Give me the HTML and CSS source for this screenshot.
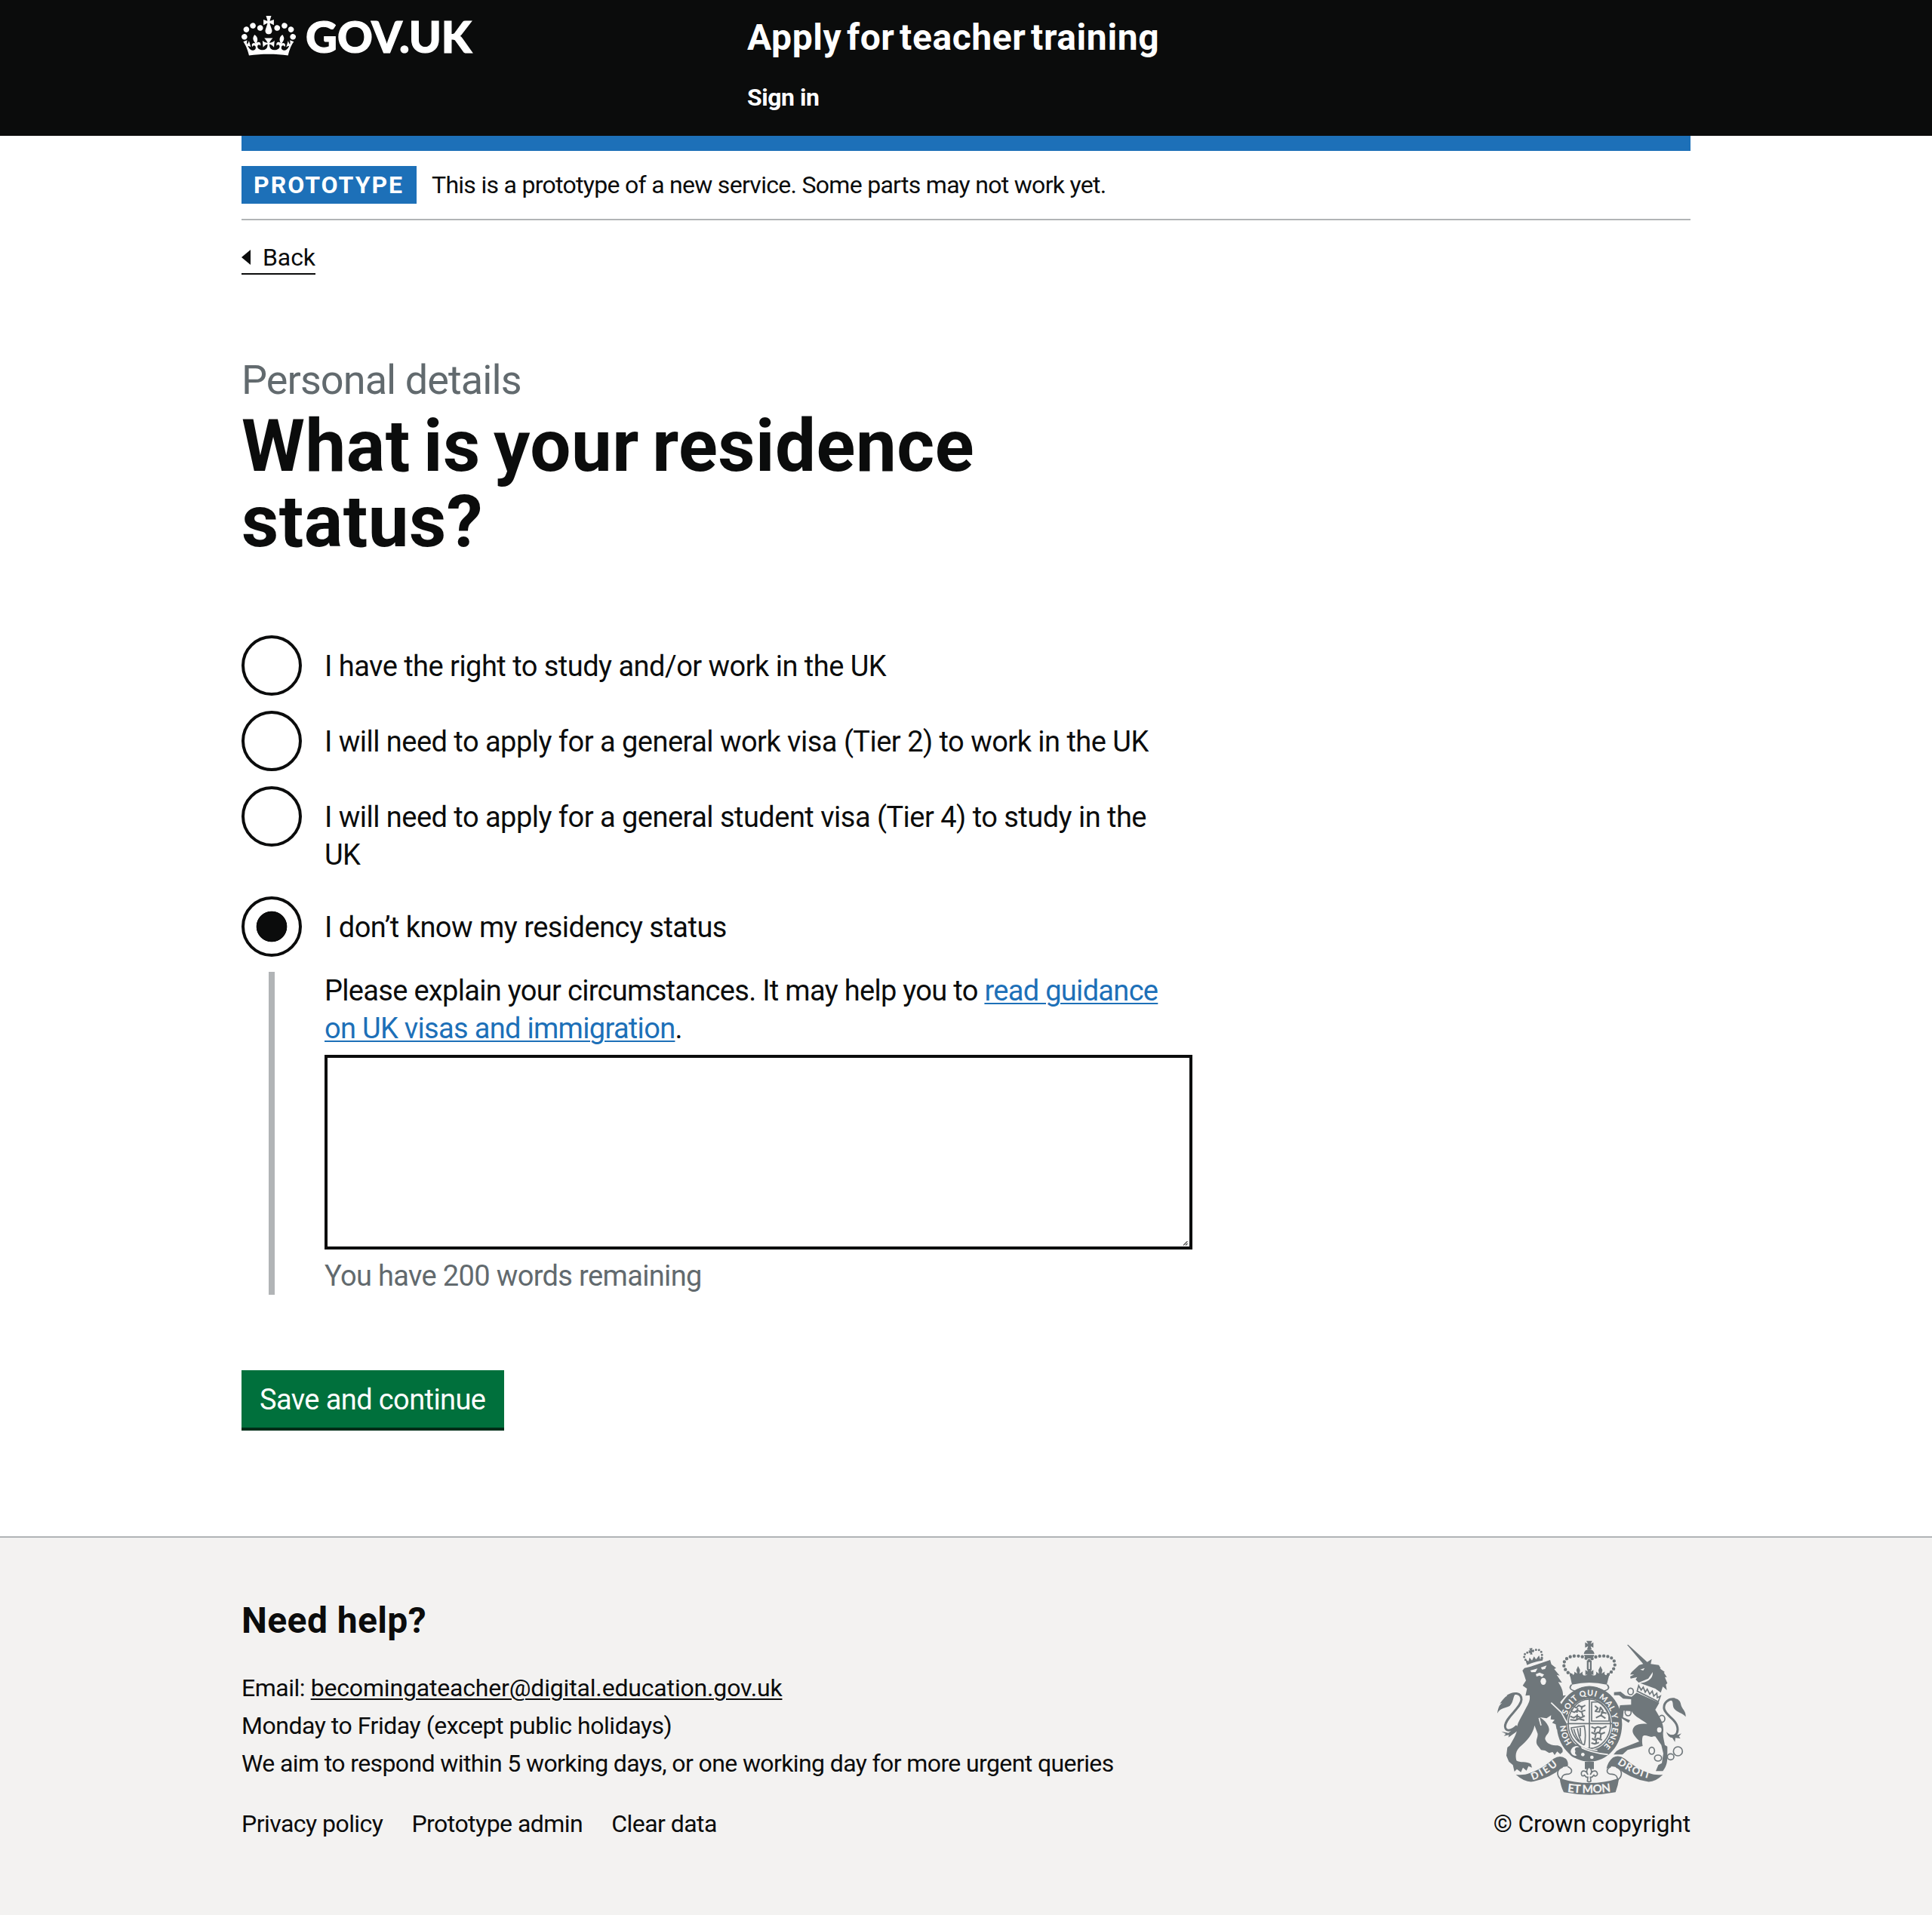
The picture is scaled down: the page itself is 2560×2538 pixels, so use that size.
FILE: index.html
```html
<!DOCTYPE html>
<html lang="en">
<head>
<meta charset="utf-8">
<title>What is your residence status? - Apply for teacher training</title>
<link rel="stylesheet" href="styles.css">
</head>
<body>
<header class="header">
  <div class="container header-inner">
    <a class="logo" href="#">
      <svg class="logo-crown" viewBox="0 0 132 97" aria-hidden="true"><path fill="currentColor" fill-rule="evenodd" d="M25 30.2c3.5 1.5 7.7-.2 9.1-3.7 1.5-3.6-.2-7.8-3.9-9.2-3.6-1.4-7.6.3-9.1 3.9-1.4 3.5.3 7.5 3.9 9zM9 39.5c3.6 1.5 7.8-.2 9.2-3.7 1.5-3.6-.2-7.8-3.9-9.1-3.6-1.5-7.6.2-9.1 3.8-1.4 3.5.3 7.5 3.8 9zM4.4 57.2c3.5 1.5 7.7-.2 9.1-3.8 1.5-3.6-.2-7.7-3.9-9.1-3.5-1.5-7.6.3-9.1 3.8-1.4 3.5.3 7.6 3.9 9.1zm38.3-21.4c3.5 1.5 7.7-.2 9.1-3.8 1.5-3.6-.2-7.7-3.9-9.1-3.6-1.5-7.6.3-9.1 3.8-1.3 3.6.4 7.7 3.9 9.1zm64.4-5.6c-3.6 1.5-7.8-.2-9.1-3.7-1.5-3.6.2-7.8 3.8-9.2 3.6-1.4 7.7.3 9.2 3.9 1.3 3.5-.4 7.5-3.9 9zm15.9 9.3c-3.6 1.5-7.7-.2-9.1-3.7-1.5-3.6.2-7.8 3.7-9.1 3.6-1.5 7.7.2 9.2 3.8 1.5 3.5-.3 7.5-3.8 9zm4.7 17.7c-3.6 1.5-7.8-.2-9.2-3.8-1.5-3.6.2-7.7 3.9-9.1 3.6-1.5 7.7.3 9.2 3.8 1.3 3.5-.4 7.6-3.9 9.1zM89.3 35.8c-3.6 1.5-7.8-.2-9.2-3.8-1.4-3.6.2-7.7 3.9-9.1 3.6-1.5 7.7.3 9.2 3.8 1.4 3.6-.3 7.7-3.9 9.1zM69.7 17.7l8.9 4.7V9.3l-8.9 2.8c-.2-.3-.5-.6-.9-.9L72.4 0H59.6l3.5 11.2c-.3.3-.6.5-.9.9l-8.8-2.8v13.1l8.8-4.7c.3.3.6.7.9.9l-5 15.4v.1c-.2.8-.4 1.6-.4 2.4 0 4.1 3.1 7.5 7 8.1h.2c.3 0 .7.1 1 .1.4 0 .7 0 1-.1h.2c4-.6 7.1-4.1 7.1-8.1 0-.8-.1-1.7-.4-2.4V34l-5.1-15.4c.4-.2.7-.6 1-.9zM66 92.8c16.9 0 32.8 1.1 47.1 3.2 4-16.9 8.9-26.7 14-33.5l-9.6-3.4c1 4.9 1.1 7.2 0 10.2-1.5-1.4-3-4.3-4.2-8.7L108.6 76c2.8-2 5-3.2 7.5-3.3-4.4 9.4-10 11.9-13.6 11.2-4.3-.8-6.3-4.6-5.6-7.9 1-4.7 5.7-5.9 8-.5 4.3-8.7-3-11.4-7.6-8.8 7.1-7.2 7.9-13.5 2.1-21.1-8 6.1-8.1 12.3-4.5 20.8-4.7-5.4-12.1-2.5-9.5 6.2 3.4-5.2 7.9-2 7.2 3.1-.6 4.3-6.4 7.8-13.5 7.2-10.3-.9-10.9-8-11.2-13.8 2.5-.5 7.1 1.8 11 7.3L80.2 60c-4.1 4.4-8 5.3-12.3 5.4 1.4-4.4 8-11.6 8-11.6H55.5s6.4 7.2 7.9 11.6c-4.2-.1-8-1-12.3-5.4l1.4 16.4c3.9-5.5 8.5-7.7 10.9-7.3-.3 5.8-.9 12.8-11.1 13.8-7.2.6-12.9-2.9-13.5-7.2-.7-5 3.8-8.3 7.1-3.1 2.7-8.7-4.6-11.6-9.4-6.2 3.7-8.5 3.6-14.7-4.6-20.8-5.8 7.6-5 13.9 2.2 21.1-4.7-2.6-11.9.1-7.7 8.8 2.3-5.5 7.1-4.2 8.1.5.7 3.3-1.3 7.1-5.7 7.9-3.5.7-9-1.8-13.5-11.2 2.5.1 4.7 1.3 7.5 3.3l-4.7-15.4c-1.2 4.4-2.7 7.2-4.3 8.7-1.1-3-.9-5.3 0-10.2l-9.5 3.4c5 6.9 9.9 16.7 14 33.5 14.8-2.1 30.8-3.2 47.7-3.2z"/></svg>
      <svg class="logo-text" width="226" height="60" viewBox="0 0 226 60"><text x="0" y="51" textLength="220" lengthAdjust="spacingAndGlyphs">GOV.UK</text></svg>
    </a>
    <div class="header-content">
      <a class="service-name" href="#">Apply for teacher training</a>
      <nav><a class="nav-link" href="#">Sign in</a></nav>
    </div>
  </div>
</header>

<div class="container">
  <div class="phase-banner">
    <strong class="tag">prototype</strong>
    <span class="phase-text">This is a prototype of a new service. Some parts may not work yet.</span>
  </div>
  <a class="back-link" href="#"><svg width="12" height="20" viewBox="0 0 12 20" aria-hidden="true"><path d="M12 0V20L0 10Z" fill="currentColor"/></svg><span>Back</span></a>

  <main class="main">
    <h1 class="heading"><span class="caption">Personal details</span>What is your residence status?</h1>
    <form>
      <div class="radio">
        <input type="radio" name="status" id="r1"><label for="r1">I have the right to study and/or work in the UK</label>
      </div>
      <div class="radio">
        <input type="radio" name="status" id="r2"><label for="r2">I will need to apply for a general work visa (Tier 2) to work in the UK</label>
      </div>
      <div class="radio">
        <input type="radio" name="status" id="r3"><label for="r3">I will need to apply for a general student visa (Tier 4) to study in the UK</label>
      </div>
      <div class="radio">
        <input type="radio" name="status" id="r4" checked><label for="r4">I don’t know my residency status</label>
      </div>
      <div class="conditional">
        <label class="details-label" for="details">Please explain your circumstances. It may help you to <a class="link" href="#">read guidance on UK visas and immigration</a>.</label>
        <div class="textarea-wrap">
          <textarea id="details" rows="5"></textarea>
          <svg class="grip" width="6" height="6" viewBox="0 0 6 6" aria-hidden="true"><path d="M0 5.5L5.5 0M3 5.5L5.5 3" stroke="#555" stroke-width="1.3"/></svg>
        </div>
        <span class="word-count">You have 200 words remaining</span>
      </div>
      <button class="button" type="button">Save and continue</button>
    </form>
  </main>
</div>

<footer class="footer">
  <div class="container footer-inner">
    <div>
      <h2 class="footer-heading">Need help?</h2>
      <div class="footer-text">Email: <a class="footer-mail" href="#">becomingateacher@digital.education.gov.uk</a></div>
      <div class="footer-text">Monday to Friday (except public holidays)</div>
      <div class="footer-text footer-note">We aim to respond within 5 working days, or one working day for more urgent queries</div>
      <nav class="footer-links"><a href="#">Privacy policy</a><a href="#">Prototype admin</a><a href="#">Clear data</a></nav>
    </div>
    <div class="copyright">
      <svg class="crest" width="250" height="205" viewBox="72 70 750 615" aria-hidden="true">
        <defs>
          <path id="garter" d="M378 488A93 112 0 1 1 486 498"/>
          <path id="scroll-left" d="M212 626Q270 607 322 557"/>
          <path id="scroll-mid" d="M350 672Q438 684 530 670"/>
          <path id="scroll-right" d="M548 560Q610 606 684 622"/>
        </defs>
        <g class="ink">
          <!-- lion tail and body -->
          <path class="tail" d="M112 292C136 276 168 276 168 306C166 340 104 375 103 412C104 434 126 432 150 410"/>
          <path d="M72 360C76 330 84 324 92 318L82 322C98 300 110 282 142 286C134 298 136 316 122 330C108 340 84 336 72 360ZM88 432L116 438L150 412L158 424C140 440 125 450 116 456L118 446L98 450L106 442Z"/>
          <path d="M172 190L180 180L205 174L282 148L287 165L306 180L298 184L320 210L308 207L329 238L314 236C328 258 334 272 333 290L345 288L322 316L342 350C350 372 348 392 344 420L330 432L322 420L308 424L304 404L290 398L300 386L284 384L286 368L268 380L242 376C262 390 276 404 278 425C278 442 262 448 262 462C268 482 290 488 312 488C327 492 335 502 331 515L322 522L310 512L300 526L292 514L278 518L262 508L246 506L232 488C220 468 236 455 232 440L220 408C215 440 190 470 160 495C145 510 143 528 148 548C160 558 190 550 206 562L210 576L196 570L188 588L174 576L166 594L150 582L140 592L134 566L118 552L108 528L112 496L122 488C132 468 152 440 150 420C150 400 165 380 175 360C190 330 206 310 200 288L184 290L190 262L173 250L186 230L178 205Z"/>
          <!-- lion crown -->
          <path class="dots" d="M192 156C170 135 176 118 205 116C235 98 256 108 248 144"/>
          <path d="M190 168L184 146L196 154L200 138L210 150L218 134L226 146L238 130L242 144L254 138L252 150C232 152 210 160 190 168ZM199 102L212 100L209 109L216 107V118L209 116L212 126H202L204 118L197 120V109L203 111Z"/>
          <!-- large crown -->
          <path class="dots big" d="M366 208C318 178 332 132 384 132C412 132 428 140 438 152C448 140 466 132 494 132C546 132 556 178 510 208"/>
          <path d="M426 72H449L443 84L454 78V99L443 93L447 106H429L433 93L421 99V78L433 84ZM416 124Q418 106 437 106Q456 106 458 124ZM417 128H457Q456 142 437 143Q419 142 417 128ZM428 150H435V184H428ZM440 150H447V184H440Z"/>
          <path d="M358 196L370 206C376 212 382 198 376 194L390 202L386 188L393 172L401 188L399 203L412 194C406 208 420 216 430 204L422 208V188L432 194L428 184H448L444 194L454 188V208L446 204C456 216 470 208 464 194L476 203L474 188L482 172L490 188L487 202L500 194C494 206 504 212 510 206L520 196L507 246Q438 230 369 246Z"/>
          <path class="line" d="M368 246Q350 262 380 272Q438 236 496 272Q526 262 508 246"/>
          <!-- garter and shield -->
          <path fill-rule="evenodd" d="M438 254C512 254 568 318 568 402C568 486 512 552 438 552C366 552 308 486 308 402C308 318 366 254 438 254ZM438 302C390 302 349 346 349 402C349 458 390 506 438 506C488 506 528 458 528 402C528 346 488 302 438 302Z"/>
          <ellipse class="line" cx="438" cy="402" rx="84" ry="98"/>
          <path class="line" d="M438 302V506M348 401H528M447 316V391H516V370Q500 328 470 314Z"/>
          <path class="lions" d="M372 330l14 8 10-10 12 8 14-8M364 350l14 6 12-8 14 6 18-6M362 372l14 6 12-8 16 8 16-8M362 386l20 2 14-6 22 6M372 340l-6 10M392 340l-4 18M410 330l-4 16M408 356l6 20M390 364l-2 20"/>
          <path class="lions" d="M446 414l14 6 12-6 16 6 18-8M446 436l14 6 12-6 14 6 14-6M448 460l12 6 12-6 16 6M446 478l14 4 16-6M462 420l-4 16M484 418l-6 18M464 442l-4 18M484 442l-2 18M466 466l-2 14"/>
          <path class="lions" d="M460 330l12 10-10 12 16 2 4-18 10 14-8 18-20 10M484 368l18 12M484 354l22 6"/>
          <path class="line" d="M364 418L418 410Q426 450 418 486M366 420Q378 470 418 486M376 422Q384 454 400 472M390 420Q394 450 408 478M402 418V452"/>
          <path d="M428 498h20l12 12h-44z"/>
        </g>
        <g class="paper">
          <path d="M203 190L232 182L224 196L208 197ZM245 178L268 170L262 184L250 186ZM225 204L240 198L258 206L250 216L240 210L228 214Z"/>
          <ellipse cx="255" cy="233" rx="11" ry="14"/>
          <path class="paper-line" d="M286 318L326 356L350 400M238 378L246 408"/>
          <path class="paper-line" d="M398 492Q440 516 512 524M396 484Q430 504 470 508"/>
          <circle cx="412" cy="524" r="7"/><circle cx="448" cy="535" r="7"/>
        </g>
        <g class="ink">
          <path class="line buckle" d="M360 512C364 484 398 478 404 500C386 494 378 504 388 510C378 520 392 528 398 522C390 540 364 534 360 512Z"/>
          <!-- unicorn -->
          <path d="M588 88L592 87L668 156L686 144L682 164L714 168L722 182L718 182L738 196L734 198L746 216L738 216L748 240L742 246L746 268L730 254L722 278L700 262L640 240C664 238 692 226 690 196L672 222L634 238L622 226L628 216L602 222L600 214L616 206L600 206L606 196L636 168L652 164Z"/>
          <path d="M626 278L716 318L700 346C716 372 734 400 732 430C728 450 736 470 738 486L748 492V540C746 560 744 570 730 590L702 590L712 566L726 558L732 520L724 486L700 452C680 460 660 440 650 452C646 466 648 480 650 490L590 506L570 524L534 524L546 510L560 502L636 472C620 450 604 440 612 420C622 400 650 400 668 402C650 386 620 376 606 352L574 350L572 376L600 388L594 398L560 376L556 346L560 328L604 326L604 304L572 302L556 288L536 288L536 276L562 274L582 290L606 294Z"/>
          <path class="tail" d="M778 304C752 300 732 318 735 342C742 372 788 384 789 424C788 444 778 452 760 450"/>
          <path d="M758 304C780 294 800 306 802 326C806 344 822 350 821 374C808 358 784 356 774 340C766 326 776 314 758 304ZM744 434C760 452 784 450 804 440L794 452L800 460L780 458L778 474L768 458Q750 456 744 434Z"/>
        </g>
        <g class="paper">
          <path d="M640 186L658 180L652 190ZM632 246L722 290L714 316L624 276Z"/>
          <ellipse cx="716" cy="426" rx="9" ry="10"/><ellipse cx="694" cy="462" rx="9" ry="10"/>
        </g>
        <g class="chain">
          <path d="M628 272L634 250L644 268L652 256L660 276L668 264L678 284L688 272L694 292L706 280L708 298L720 292L712 314Z"/>
          <ellipse cx="602" cy="273" rx="11" ry="13"/><ellipse cx="592" cy="356" rx="12" ry="14"/><ellipse cx="726" cy="382" rx="12" ry="14"/>
          <ellipse cx="686" cy="509" rx="11" ry="14"/><ellipse cx="711" cy="538" rx="14" ry="12"/><ellipse cx="761" cy="533" rx="13" ry="12"/><circle cx="790" cy="511" r="18"/>
        </g>
        <!-- ribbon -->
        <g class="ink">
          <path d="M146 604C170 606 186 604 200 598Q250 582 296 540Q322 524 344 540Q356 552 352 572L332 574Q280 620 210 632Q180 634 146 604Z"/>
          <path d="M730 604C706 606 692 604 676 598Q628 582 578 540Q554 524 532 536Q512 552 506 580L524 572L544 574Q600 620 670 632Q700 634 730 604Z"/>
          <path class="line ribbon" d="M352 572C376 584 370 602 348 602C326 604 330 618 326 624C308 610 304 584 332 574"/>
          <path class="line ribbon" d="M524 572C500 584 506 602 528 602C552 604 546 618 552 624C570 610 572 584 544 574"/>
          <path d="M320 618Q438 656 556 618Q552 648 542 674Q438 694 336 674Q324 650 320 618Z"/>
          <path d="M420 553H456V582H420Z"/>
          <path class="lily" d="M437 572C424 586 426 596 432 604C426 586 404 584 406 602C408 612 416 610 418 606L426 614H432L430 630Q437 636 444 630L442 614H448L456 606C460 612 468 610 470 602C470 584 448 586 442 604C450 594 448 584 437 572Z"/>
        </g>
        <g class="motto">
          <text font-size="32"><textPath href="#garter" startOffset="14">HON</textPath></text>
          <text font-size="32"><textPath href="#garter" startOffset="130" textLength="385">SOIT QUI MAL Y PENSE</textPath></text>
          <text font-size="40"><textPath href="#scroll-left" textLength="118">DIEU</textPath></text>
          <text font-size="46"><textPath href="#scroll-mid" textLength="174">ET MON</textPath></text>
          <text font-size="40"><textPath href="#scroll-right" textLength="142">DROIT</textPath></text>
        </g>
      </svg>
      <a class="copyright-link" href="#">© Crown copyright</a>
    </div>
  </div>
</footer>
</body>
</html>
```
FILE: styles.css
```css
* { box-sizing: border-box; }

body {
  margin: 0;
  color: #0b0c0c;
  background: #fff;
  font-family: Roboto, "Liberation Sans", sans-serif;
  font-size: 38px;
  line-height: 50px;
  letter-spacing: -0.62px;
}

a { color: inherit; text-decoration: none; }

.container { width: 1920px; margin: 0 auto; }

/* Header */
.header { height: 180px; background: #0b0c0c; color: #fff; }
.header-inner { display: grid; grid-template-columns: 670px 1fr; }
.logo { display: flex; align-items: flex-start; gap: 13px; padding-top: 19px; }
.logo-crown { width: 72px; height: 53px; margin-top: 2px; }
.logo-text { display: block; overflow: visible; }
.logo-text text { font: 900 58px Lato, sans-serif; letter-spacing: 0; fill: #fff; stroke: #fff; stroke-width: 1.2px; }
.header-content { display: flex; flex-direction: column; padding-top: 25px; }
.service-name { font-size: 48px; font-weight: 700; letter-spacing: 0.6px; word-spacing: -6px; }
.nav-link { display: block; margin-top: 34px; font-size: 32px; line-height: 40px; font-weight: 700; letter-spacing: -0.45px; }

/* Phase banner */
.phase-banner {
  display: flex;
  gap: 20px;
  height: 112px;
  padding-top: 20px;
  border-top: 20px solid #1d70b8;
  border-bottom: 2px solid #b1b4b6;
  font-size: 32px;
}
.tag {
  width: 232px;
  height: 50px;
  padding-left: 16px;
  background: #1d70b8;
  color: #fff;
  font-weight: 700;
  letter-spacing: 2px;
  text-transform: uppercase;
}
.phase-text { letter-spacing: -0.71px; }

.back-link {
  display: inline-flex;
  align-items: center;
  gap: 16px;
  height: 43px;
  margin-top: 29px;
  padding-bottom: 1px;
  border-bottom: 2px solid #0b0c0c;
  font-size: 32px;
  line-height: 40px;
  letter-spacing: -0.1px;
  vertical-align: top;
}

/* Form */
.main { width: 1260px; padding-top: 110px; }
.heading { width: 1100px; margin: 0 0 101px; font-size: 96px; line-height: 100px; font-weight: 700; letter-spacing: 0.5px; word-spacing: -7px; }
.caption { display: block; margin-bottom: 7px; color: #626a6e; font-size: 54px; line-height: 60px; font-weight: 400; letter-spacing: -0.92px; word-spacing: 0; }

.radio { display: flex; gap: 30px; min-height: 80px; margin-bottom: 20px; }
.radio input {
  flex: none;
  appearance: none;
  width: 80px;
  height: 80px;
  margin: 0;
  border: 4px solid #0b0c0c;
  border-radius: 50%;
}
.radio input:checked { background: radial-gradient(circle, #0b0c0c 20px, transparent 20.7px); }
.radio label { width: 1120px; padding: 16px 0 10px; letter-spacing: -0.52px; }

.conditional { width: 1224px; margin-left: 36px; padding-left: 66px; border-left: 8px solid #b1b4b6; }
.details-label { display: block; letter-spacing: -0.69px; }
.link { color: #1d70b8; text-decoration: underline; text-decoration-thickness: 2px; text-underline-offset: 3px; }
.textarea-wrap { position: relative; height: 258px; margin: 10px 0; }
.textarea-wrap textarea {
  display: block;
  width: 1150px;
  height: 258px;
  padding: 10px;
  border: 4px solid #0b0c0c;
  border-radius: 0;
  background: #fff;
  font: inherit;
  resize: none;
}
.grip { position: absolute; right: 6px; bottom: 5px; }
.word-count { display: block; color: #626a6e; letter-spacing: -0.65px; }

.button {
  display: block;
  height: 76px;
  width: 348px;
  margin-top: 100px;
  padding: 14px 0 12px 24px;
  border: 0;
  background: #00703c;
  box-shadow: 0 4px 0 #002d18;
  color: #fff;
  font: inherit;
  letter-spacing: -0.6px;
  text-align: left;
}

/* Footer */
.footer { height: 502px; margin-top: 144px; padding-top: 85px; border-top: 2px solid #b1b4b6; background: #f3f2f1; font-size: 32px; }
.footer-inner { display: flex; justify-content: space-between; align-items: flex-end; }
.footer-heading { margin: 0 0 39px; font-size: 48px; font-weight: 700; letter-spacing: 0.4px; }
.footer-text { letter-spacing: -0.47px; }
.footer-note { letter-spacing: -0.61px; }
.footer-mail { text-decoration: underline; text-decoration-thickness: 2px; text-underline-offset: 3px; letter-spacing: -0.17px; }
.footer-links { display: flex; gap: 38px; margin-top: 30px; letter-spacing: -0.54px; }
.copyright { display: flex; flex-direction: column; align-items: flex-end; }
.crest { margin: 0 6px 13px 0; }
.copyright-link { letter-spacing: -0.22px; }

/* Royal coat of arms */
.crest .ink, .crest .lily { fill: #6f777b; }
.crest .line, .crest .lions, .crest .dots, .crest .chain { fill: none; stroke: #6f777b; stroke-width: 5; }
.crest .tail { fill: none; stroke: #6f777b; stroke-width: 9; }
.crest .lions { stroke-width: 6; stroke-linejoin: round; }
.crest .dots { stroke-width: 9; stroke-linecap: round; stroke-dasharray: 0 12; }
.crest .dots.big { stroke-width: 13; stroke-dasharray: 0 16; }
.crest .buckle { fill: #f3f2f1; stroke-width: 7; }
.crest .ribbon { fill: #f3f2f1; }
.crest .lily { fill: #f3f2f1; stroke: #6f777b; stroke-width: 5; }
.crest .paper { fill: #f3f2f1; }
.crest .paper-line { fill: none; stroke: #f3f2f1; stroke-width: 5; }
.crest .motto { fill: #f3f2f1; font-family: Lato, sans-serif; font-weight: 900; letter-spacing: 0; }
```
